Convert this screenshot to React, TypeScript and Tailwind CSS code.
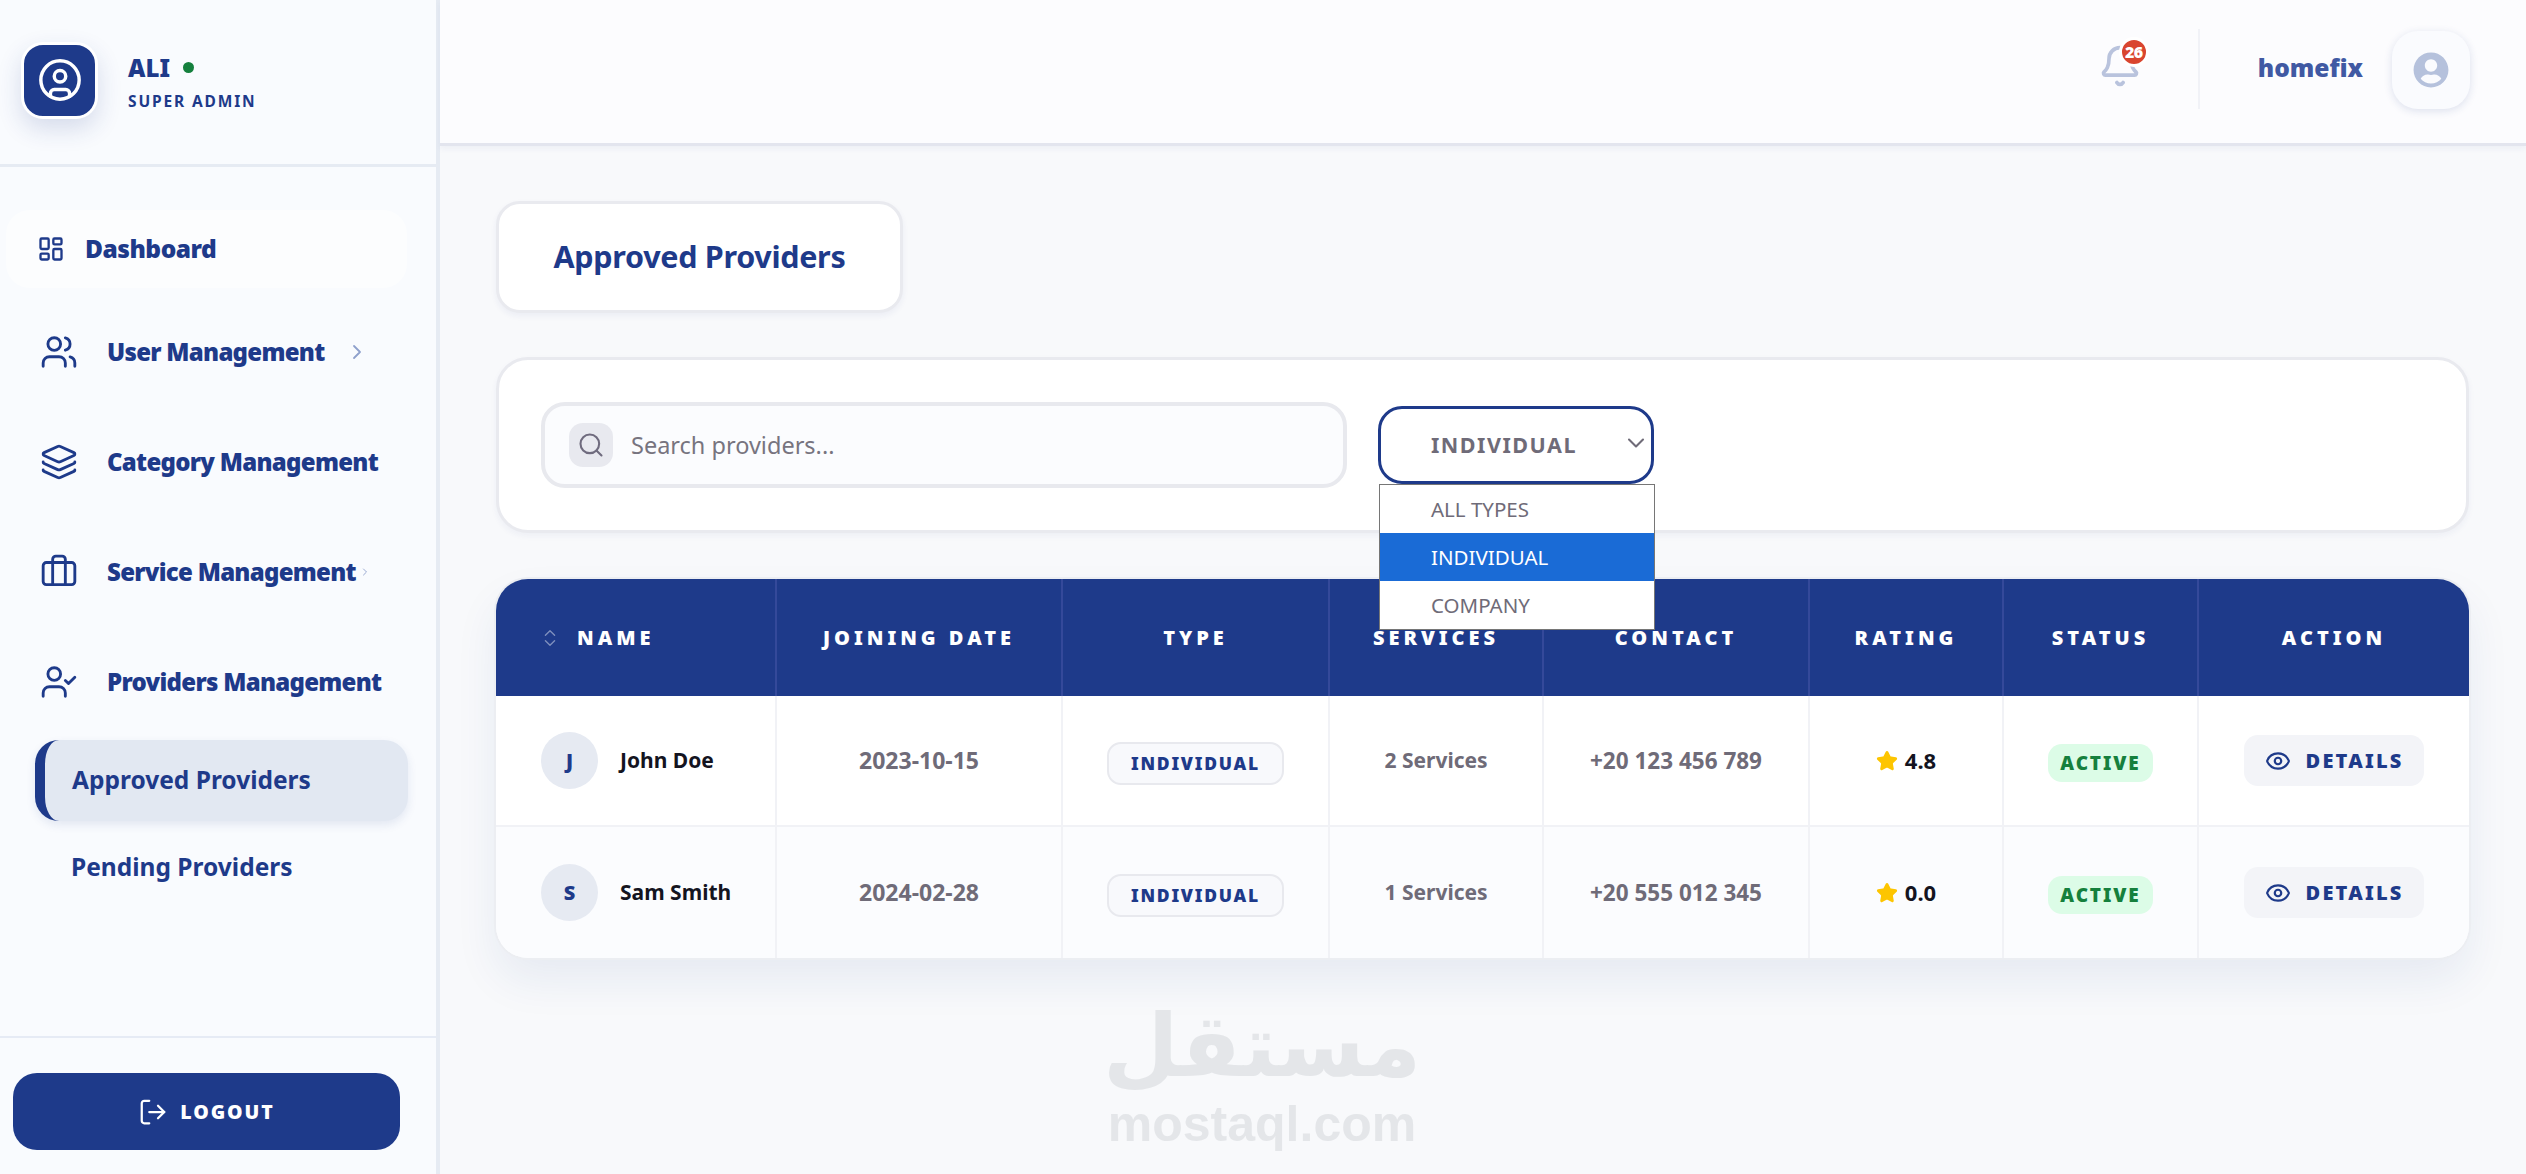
import { Bell, Briefcase, ChevronDown, ChevronRight, ChevronsUpDown, CircleUser, Eye, Layers, LayoutDashboard, LogOut, Search, Star, UserCheck, Users } from "lucide-react";
import { FaUserCircle } from "react-icons/fa";

const NAV = [
  { label: "User Management", icon: Users, chevron: "big" },
  { label: "Category Management", icon: Layers },
  { label: "Service Management", icon: Briefcase, chevron: "small" },
  { label: "Providers Management", icon: UserCheck },
];

const COLUMNS = ["JOINING DATE", "TYPE", "SERVICES", "CONTACT", "RATING", "STATUS", "ACTION"];

const ROWS = [
  { initial: "J", name: "John Doe", date: "2023-10-15", services: "2 Services", contact: "+20 123 456 789", rating: "4.8" },
  { initial: "S", name: "Sam Smith", date: "2024-02-28", services: "1 Services", contact: "+20 555 012 345", rating: "0.0" },
];

const GRID = "grid grid-cols-[279px_286px_267px_214px_266px_194px_195px_1fr]";

function Sidebar() {
  return (
    <aside className="flex h-full w-[440px] shrink-0 flex-col border-r-4 border-[#e6ebf3] bg-[#f9fbfe]">
      <div className="flex h-[167px] shrink-0 items-center gap-[30px] border-b-[3px] border-[#e6ebf3] pb-[4px] pl-[21px]">
        <div className="flex h-[77px] w-[77px] items-center justify-center rounded-[22px] border-[3px] border-white bg-[#1e3a8a] shadow-[0_10px_24px_rgba(30,58,138,0.16)]">
          <CircleUser size={46} strokeWidth={1.8} className="text-white" />
        </div>
        <div>
          <div className="flex items-center gap-[13px]">
            <span className="text-[24px] leading-[34px] font-black text-[#1e3a8a]">ALI</span>
            <span className="h-[11px] w-[11px] rounded-full bg-[#15803d]" />
          </div>
          <div className="mt-[7px] text-[15.5px] leading-[18px] font-bold tracking-[0.12em] text-[#1e3a8a]">SUPER ADMIN</div>
        </div>
      </div>

      <nav className="flex-1 pt-[43px]">
        <div className="ml-[6px] flex h-[78px] w-[401px] items-center gap-[20px] rounded-[24px] bg-[#fcfdfe] pl-[31px] text-[#1e3a8a]">
          <LayoutDashboard size={28} strokeWidth={2} />
          <span className="mt-[1px] text-[24.5px] font-black tracking-[-0.02em]">Dashboard</span>
        </div>
        <div className="mt-[9px]">
          {NAV.map(({ label, icon: Icon, chevron }) => (
            <div key={label} className="flex h-[110px] items-center gap-[29px] pl-[40px] text-[#1e3a8a]">
              <Icon size={38} strokeWidth={1.8} className="shrink-0" />
              <span className="text-[24px] font-black tracking-[-0.03em] whitespace-nowrap">{label}</span>
              {chevron === "big" && <ChevronRight size={24} strokeWidth={1.8} className="-ml-[9px] text-[#8fa0cc]" />}
              {chevron === "small" && <ChevronRight size={12} strokeWidth={1.8} className="-ml-[26px] text-[#8fa0cc]" />}
            </div>
          ))}
        </div>
        <div className="mt-[3px] ml-[35px] flex h-[81px] w-[373px] items-center rounded-[24px] border-l-[10px] border-[#1e3a8a] bg-[#e2e8f2] pl-[27px] shadow-[0_4px_10px_rgba(30,58,138,0.1)]">
          <span className="text-[24.5px] font-bold text-[#1e3a8a]">Approved Providers</span>
        </div>
        <div className="ml-[71px] mt-[6px] flex h-[81px] items-center">
          <span className="text-[24.5px] font-bold text-[#1e3a8a]">Pending Providers</span>
        </div>
      </nav>

      <div className="h-[138px] shrink-0 border-t-[2px] border-[#e6ebf5] pt-[35px] pl-[13px]">
        <button className="flex h-[77px] w-[387px] items-center justify-center gap-[12px] rounded-[24px] bg-[#1e3a8a] text-white">
          <LogOut size={30} strokeWidth={1.8} />
          <span className="text-[19.5px] font-black tracking-[0.1em]">LOGOUT</span>
        </button>
      </div>
    </aside>
  );
}

function TopBar() {
  return (
    <header className="flex h-[146px] shrink-0 items-center justify-end border-b-[3px] border-[#e3e5ee] bg-[#fcfcfe] pr-[56px] pb-[6px] shadow-[0_3px_6px_rgba(30,58,138,0.05)]">
      <div className="relative mr-[56px] -mt-[5px] text-[#b9c3dd]">
        <Bell size={44} strokeWidth={2} />
        <span className="absolute -top-[7px] -right-[7px] flex h-[30px] w-[30px] items-center justify-center rounded-full border-[3px] border-white bg-[#d9452f] text-[16px] font-black tracking-[-0.04em] text-white">26</span>
      </div>
      <div className="h-[80px] w-[2px] bg-[#f1f2f7]" />
      <span className="ml-[58px] text-[24.5px] font-black text-[#4059a3]">homefix</span>
      <div className="ml-[29px] mt-[2px] flex h-[78px] w-[78px] items-center justify-center rounded-[26px] bg-[#fafbfe] shadow-[0_2px_8px_rgba(30,58,138,0.14)]">
        <FaUserCircle size={36} className="text-[#b5c1dc]" />
      </div>
    </header>
  );
}

function Filters() {
  return (
    <section className="mt-[44px] flex h-[176px] items-center gap-[31px] rounded-[32px] border-[3px] border-[#e9eaef] bg-white pl-[42px] shadow-[0_3px_6px_rgba(30,58,138,0.05)]">
      <div className="flex h-[86px] w-[806px] items-center gap-[18px] rounded-[24px] border-[4px] border-[#e8e9ee] bg-[#fbfcfe] pl-[24px]">
        <div className="flex h-[44px] w-[44px] items-center justify-center rounded-[14px] bg-[#e8e9ef]">
          <Search size={28} strokeWidth={1.8} className="text-[#6f6b7e]" />
        </div>
        <span className="mt-[1px] text-[23.5px] text-[#77747f]">Search providers...</span>
      </div>
      <div className="relative h-[78px] w-[276px]">
        <div className="flex h-full items-center rounded-[24px] border-[3px] border-[#1e3a8a] bg-white pl-[50px]">
          <span className="text-[21.5px] font-bold tracking-[0.07em] text-[#6f6b78]">INDIVIDUAL</span>
          <ChevronDown size={28} strokeWidth={1.8} className="absolute top-[23px] right-[4px] text-[#6f6b78]" />
        </div>
        <div className="absolute top-[78px] left-[1px] z-10 w-[276px] border border-[#767676] bg-white text-[20.5px] text-[#6f6b78]">
          <div className="flex h-[48px] items-center pl-[51px]">ALL TYPES</div>
          <div className="flex h-[48px] items-center bg-[#1a6bd6] pl-[51px] text-white">INDIVIDUAL</div>
          <div className="flex h-[48px] items-center pl-[51px]">COMPANY</div>
        </div>
      </div>
    </section>
  );
}

function ProvidersTable() {
  return (
    <section className="mt-[46px] overflow-hidden rounded-[32px] bg-[#fbfcfe] shadow-[0_0_0_2px_#eceef2,0_22px_44px_rgba(30,58,138,0.08)]">
      <div className={`${GRID} h-[117px] bg-[#1e3a8a] text-[20px] font-black tracking-[0.2em] text-white`}>
        <div className="flex items-center pl-[43px]">
          <ChevronsUpDown size={22} strokeWidth={1.5} className="mr-[16px] text-[#7e8fbd]" />
          NAME
        </div>
        {COLUMNS.map((col) => (
          <div key={col} className="flex items-center justify-center border-l-2 border-[#34499a]">{col}</div>
        ))}
      </div>
      {ROWS.map((row, i) => (
        <div key={row.name} className={`${GRID} h-[131px] text-[22px] font-bold text-[#6f6b78] ${i === 0 ? "border-b-2 border-[#f1f2f6] bg-white" : "bg-[#fbfcfe]"}`}>
          <div className="flex items-center pl-[45px]">
            <div className="flex h-[57px] w-[57px] items-center justify-center rounded-full bg-[#e6eaf2] text-[20px] font-black text-[#1e3a8a]">{row.initial}</div>
            <span className="ml-[22px] text-[21px] text-[#14141f]">{row.name}</span>
          </div>
          <div className="flex items-center justify-center border-l-2 border-[#f1f2f6] text-[23px]">{row.date}</div>
          <div className="flex items-center justify-center border-l-2 border-[#f1f2f6]">
            <span className="mt-[5px] flex h-[43px] w-[177px] items-center justify-center rounded-[14px] border-2 border-[#e8e9ee] bg-[#f8f9fc] text-[17.5px] font-black tracking-[0.1em] text-[#1e3a8a]">INDIVIDUAL</span>
          </div>
          <div className="flex items-center justify-center border-l-2 border-[#f1f2f6] text-[21px]">{row.services}</div>
          <div className="flex items-center justify-center border-l-2 border-[#f1f2f6] text-[22.5px]">{row.contact}</div>
          <div className="flex items-center justify-center gap-[7px] border-l-2 border-[#f1f2f6] text-[#14141f]">
            <Star size={22} strokeWidth={2} className="fill-[#fdc500] text-[#fdc500]" />
            {row.rating}
          </div>
          <div className="flex items-center justify-center border-l-2 border-[#f1f2f6]">
            <span className="mt-[5px] flex h-[38px] w-[105px] items-center justify-center rounded-[14px] bg-[#dcfce7] text-[19px] font-black tracking-[0.1em] text-[#15803d]">ACTIVE</span>
          </div>
          <div className="flex items-center justify-center border-l-2 border-[#f1f2f6]">
            <span className="flex h-[51px] w-[180px] items-center justify-center gap-[15px] rounded-[14px] bg-[#f3f4f8] text-[20px] font-black tracking-[0.11em] text-[#1e3a8a]">
              <Eye size={26} strokeWidth={2} />
              DETAILS
            </span>
          </div>
        </div>
      ))}
    </section>
  );
}

export default function App() {
  return (
    <div className="relative flex h-[1174px] w-full overflow-hidden bg-[#f8f9fb] font-['Noto_Sans','Open_Sans',sans-serif]">
      <Sidebar />
      <main className="flex min-w-0 flex-1 flex-col">
        <TopBar />
        <div className="pr-[57px] pl-[56px] pt-[55px]">
          <div className="flex h-[112px] w-[407px] items-center justify-center rounded-[24px] border-[3px] border-[#e9eaef] bg-white shadow-[0_3px_6px_rgba(30,58,138,0.06)]">
            <h1 className="text-[30.5px] font-bold tracking-[-0.01em] text-[#1e3a8a]">Approved Providers</h1>
          </div>
          <Filters />
          <ProvidersTable />
        </div>
      </main>
      {/* watermark sits over the page */}
      <div className="pointer-events-none absolute top-[991px] left-[1110px] flex w-[304px] flex-col items-center text-[#e4e6e9]">
        <span className="font-['DejaVu_Sans',sans-serif] text-[87px] leading-[110px] font-bold">مستقل</span>
        <span className="font-['Liberation_Sans',sans-serif] text-[50px] leading-[46px] font-bold">mostaql.com</span>
      </div>
    </div>
  );
}
